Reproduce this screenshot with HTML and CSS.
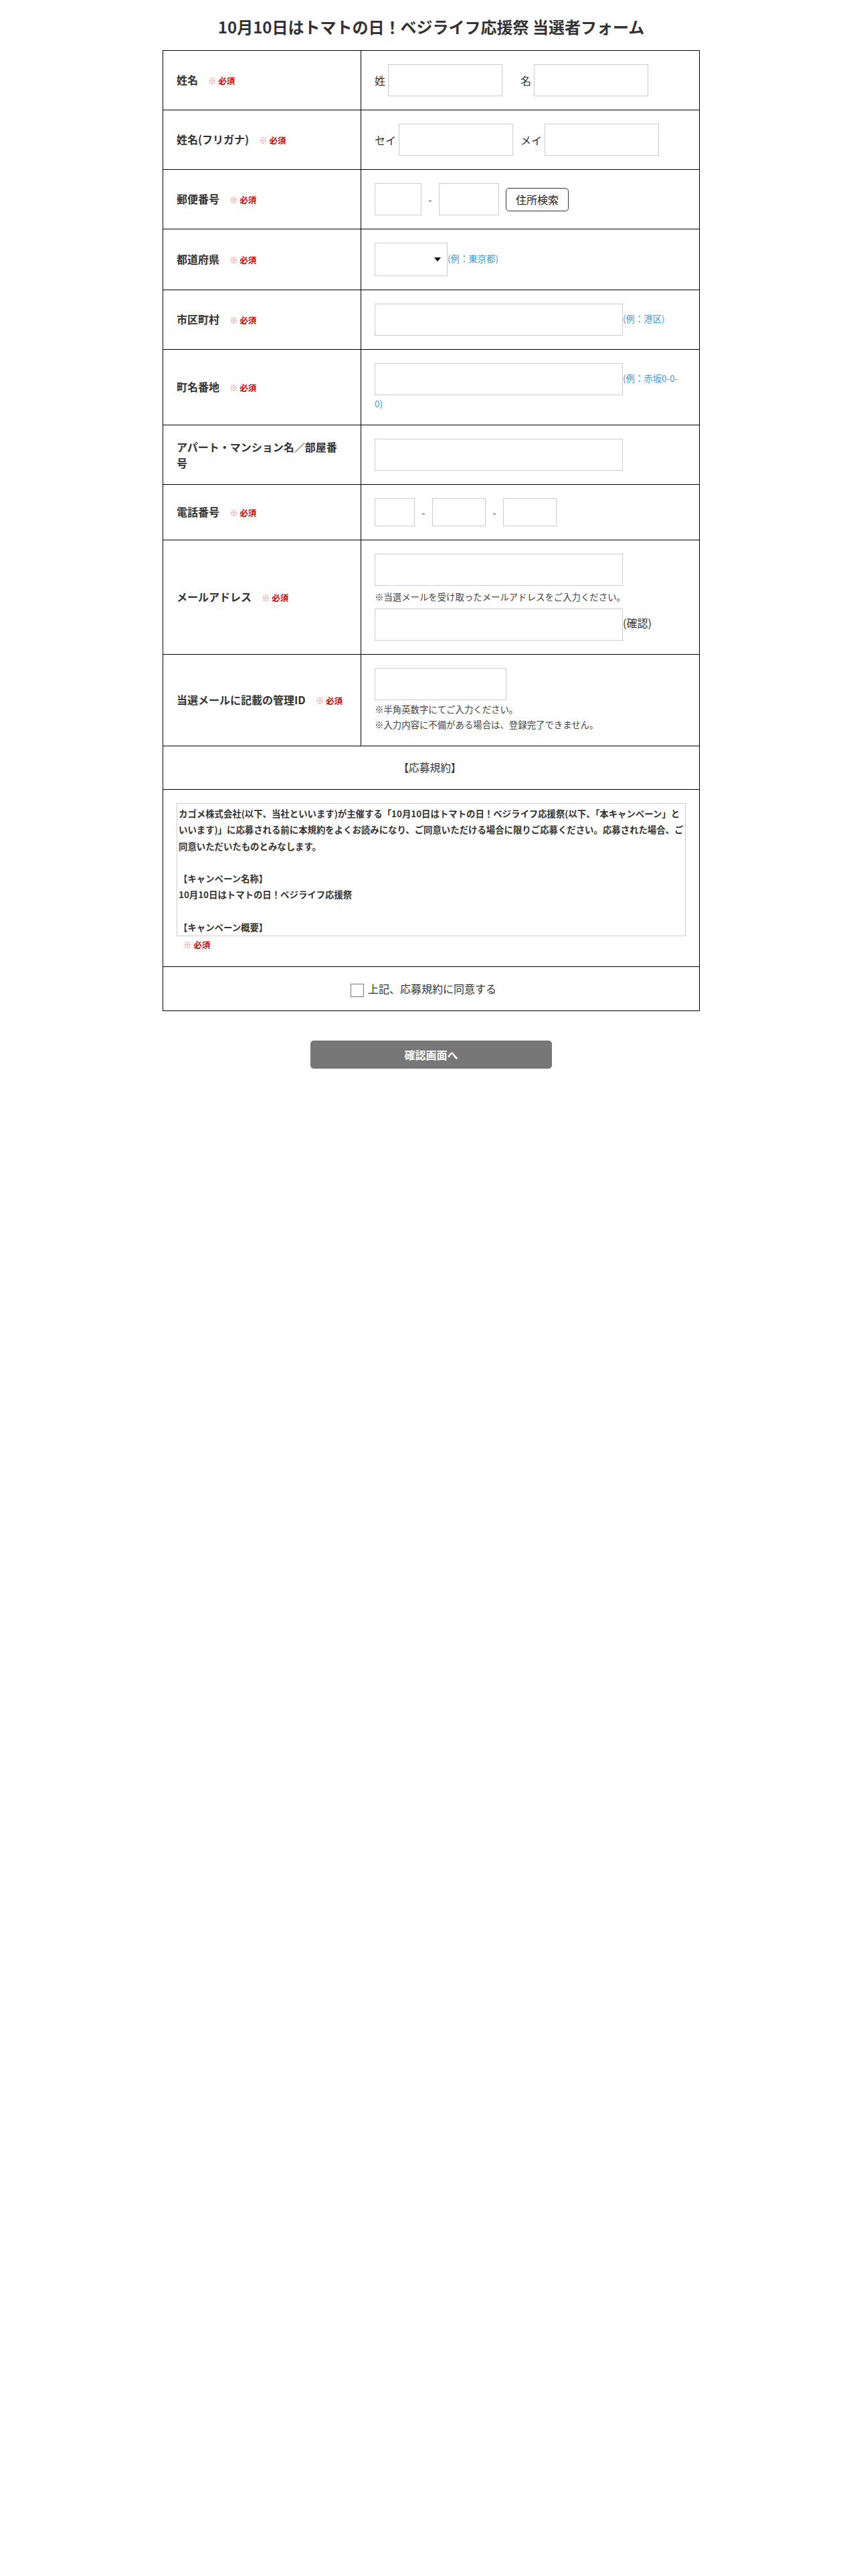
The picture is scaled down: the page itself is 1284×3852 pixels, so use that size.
FILE: index.html
```html
<!DOCTYPE html>
<html lang="ja">
<head>
  <meta charset="UTF-8" />
  <meta name="viewport" content="width=device-width, initial-scale=1.0"/>
  <title>10月10日はトマトの日！ベジライフ応援祭 当選者フォーム</title>
  <link rel="stylesheet" href="styles.css">
</head>
<body>
  <main>
    <h1>10月10日はトマトの日！ベジライフ応援祭 当選者フォーム</h1>

    <form class="entry-form" onsubmit="return false;">
      <div class="row">
        <div class="label"><p>姓名<span class="req"><span class="kome">※</span> 必須</span></p></div>
        <div class="value flex">
          <span class="name-group"><span>姓</span><input class="w-name" type="text"></span>
          <span class="name-group"><span>名</span><input class="w-name" type="text"></span>
        </div>
      </div>

      <div class="row">
        <div class="label"><p>姓名(フリガナ)<span class="req"><span class="kome">※</span> 必須</span></p></div>
        <div class="value flex">
          <span class="name-group"><span>セイ</span><input class="w-name" type="text"></span>
          <span class="name-group"><span>メイ</span><input class="w-name" type="text"></span>
        </div>
      </div>

      <div class="row">
        <div class="label"><p>郵便番号<span class="req"><span class="kome">※</span> 必須</span></p></div>
        <div class="value flex">
          <input class="w-zip1" type="text">
          <span class="sep">-</span>
          <input class="w-zip2" type="text">
          <button type="button" class="btn-search">住所検索</button>
        </div>
      </div>

      <div class="row">
        <div class="label"><p>都道府県<span class="req"><span class="kome">※</span> 必須</span></p></div>
        <div class="value">
          <span class="select-wrap"><select><option></option></select></span><span class="hint">(例：東京都)</span>
        </div>
      </div>

      <div class="row">
        <div class="label"><p>市区町村<span class="req"><span class="kome">※</span> 必須</span></p></div>
        <div class="value">
          <input class="w-long" type="text"><span class="hint">(例：港区)</span>
        </div>
      </div>

      <div class="row">
        <div class="label"><p>町名番地<span class="req"><span class="kome">※</span> 必須</span></p></div>
        <div class="value">
          <input class="w-long" type="text"><span class="hint">(例：赤坂0-0-<wbr>0)</span>
        </div>
      </div>

      <div class="row">
        <div class="label"><p>アパート・マンション名／部屋番号</p></div>
        <div class="value">
          <input class="w-long" type="text">
        </div>
      </div>

      <div class="row">
        <div class="label"><p>電話番号<span class="req"><span class="kome">※</span> 必須</span></p></div>
        <div class="value flex">
          <input class="w-tel1" type="text">
          <span class="sep">-</span>
          <input class="w-tel2" type="text">
          <span class="sep">-</span>
          <input class="w-tel2" type="text">
        </div>
      </div>

      <div class="row">
        <div class="label"><p>メールアドレス<span class="req"><span class="kome">※</span> 必須</span></p></div>
        <div class="value">
          <input class="w-long block" type="email">
          <p class="note">※当選メールを受け取ったメールアドレスをご入力ください。</p>
          <div class="confirm"><input class="w-long" type="email"><span>(確認)</span></div>
        </div>
      </div>

      <div class="row">
        <div class="label"><p>当選メールに記載の管理ID<span class="req"><span class="kome">※</span> 必須</span></p></div>
        <div class="value">
          <input class="w-id block" type="text">
          <ul class="notes">
            <li>※半角英数字にてご入力ください。</li>
            <li>※入力内容に不備がある場合は、登録完了できません。</li>
          </ul>
        </div>
      </div>

      <div class="row full">
        <div class="value center">
          <p class="terms-title">【応募規約】</p>
        </div>
      </div>

      <div class="row full">
        <div class="value terms-cell">
          <div class="terms">
            <p>カゴメ株式会社(以下、当社といいます)が主催する「10月10日はトマトの日！ベジライフ応援祭(以下、「本キャンペーン」といいます)」に応募される前に本規約をよくお読みになり、ご同意いただける場合に限りご応募ください。応募された場合、ご同意いただいたものとみなします。</p>
            <p><br></p>
            <p>【キャンペーン名称】</p>
            <p>10月10日はトマトの日！ベジライフ応援祭</p>
            <p><br></p>
            <p>【キャンペーン概要】</p>
          </div>
          <p class="req terms-req"><span class="kome">※</span> 必須</p>
        </div>
      </div>

      <div class="row full">
        <div class="value center agree">
          <label><input type="checkbox">上記、応募規約に同意する</label>
        </div>
      </div>
    </form>

    <button type="button" class="btn-next">確認画面へ</button>
  </main>
</body>
</html>
```

FILE: styles.css
```css
body {
  font-family: "Noto Sans CJK JP", "Noto Sans", sans-serif;
  color: #333;
  background-color: #fff;
  margin: 0;
  padding: 0 0 0 5px;
}

main {
  width: 803px;
  margin: 0 auto;
}

h1 {
  font-size: 24px;
  line-height: 36px;
  font-weight: bold;
  text-align: center;
  margin: 22px 0 17px;
}

p {
  margin: 0;
}

.entry-form {
  border: 1px solid #000;
}

.row {
  display: grid;
  grid-template-columns: 296px 1fr;
  border-top: 1px solid #000;
}

.row:first-child {
  border-top: none;
}

.row.full {
  grid-template-columns: 1fr;
}

.label {
  display: flex;
  align-items: center;
  padding: 0 23px 0 20px;
  border-right: 1px solid #000;
  font-size: 16px;
  font-weight: bold;
  line-height: 24px;
}

.req {
  margin-left: 15px;
  font-size: 12.5px;
  font-weight: bold;
  color: #c00;
}

.kome {
  font-weight: normal;
  color: #ea8a8a;
}

.value {
  padding: 20px 24px 20px 20px;
  font-size: 13.4px;
  line-height: 24px;
}

.value.flex {
  display: flex;
  align-items: center;
  font-size: 16px;
}

.value.center {
  text-align: center;
}

input[type="text"],
input[type="email"] {
  box-sizing: border-box;
  height: 48px;
  border: 1px solid #ccc;
  background: #fff;
  padding: 0 8px;
  margin: 0;
  font-family: inherit;
  font-size: 16px;
  vertical-align: middle;
}

.block {
  display: block;
}

.name-group {
  display: inline-flex;
  align-items: center;
  gap: 4px;
  width: 218px;
}

.w-name { width: 171px; }
.w-zip1 { width: 70px; }
.w-zip2 { width: 90px; }
.w-long { width: 371px; }
.w-id { width: 197px; }

.w-tel1,
.w-tel2 {
  height: 42px !important;
}

.w-tel1 { width: 60px; }
.w-tel2 { width: 80px; }

.sep {
  width: 26px;
  text-align: center;
  font-size: 14px;
}

.btn-search {
  width: 94px;
  height: 35px;
  margin-left: 10px;
  padding: 0;
  border: 1px solid #333;
  border-radius: 5px;
  background: #fff;
  color: #222;
  font-family: inherit;
  font-size: 16px;
}

.select-wrap {
  position: relative;
  display: inline-block;
  vertical-align: middle;
}

.select-wrap select {
  display: block;
  width: 109px;
  height: 50px;
  appearance: none;
  border: 1px solid #ccc;
  border-radius: 0;
  background: #fff;
  margin: 0;
}

.select-wrap::after {
  content: "";
  position: absolute;
  right: 10px;
  top: 22px;
  border-left: 5px solid transparent;
  border-right: 5px solid transparent;
  border-top: 6px solid #000;
}

.hint {
  color: #3f99d6;
}

.note {
  margin: 4px 0 6px;
  color: #444;
}

.confirm {
  font-size: 16px;
}

.notes {
  list-style: none;
  margin: 2px 0 0;
  padding: 0;
  line-height: 23px;
  color: #444;
}

.terms-title {
  font-size: 15.7px;
}

.terms-cell {
  padding-right: 20px;
  line-height: 25px;
}

.terms {
  box-sizing: border-box;
  height: 199px;
  padding: 2px 0 2px 2px;
  border: 1px solid #ccc;
  overflow-y: auto;
  scrollbar-width: none;
  font-size: 13.4px;
  font-weight: bold;
  line-height: 24.3px;
}

.terms-req {
  margin-left: 10px;
}

.agree {
  font-size: 16px;
  padding-right: 43px;
}

.agree input[type="checkbox"] {
  appearance: none;
  width: 20px;
  height: 20px;
  margin: 0 6px 0 0;
  border: 1px solid #777;
  background: #fff;
  vertical-align: middle;
}

.btn-next {
  display: block;
  width: 361px;
  height: 42px;
  margin: 44px auto 0;
  border: none;
  border-radius: 5px;
  background-color: #777;
  color: #fff;
  font-family: inherit;
  font-size: 16px;
  font-weight: bold;
}
```
